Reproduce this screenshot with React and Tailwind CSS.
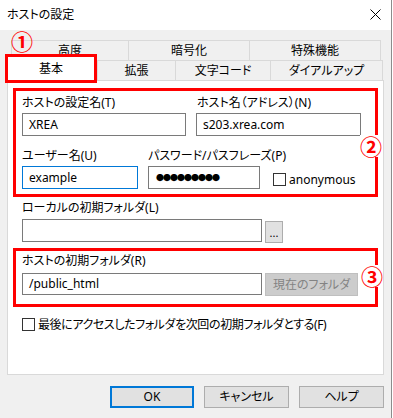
import React from 'react';

const font = "font-['Noto_Sans','Noto_Sans_CJK_JP',sans-serif] [font-feature-settings:'palt']";

function Tab({ label, w }) {
  return (
    <div className={`h-[20px] ${w} border-t border-l border-[#d9d9d9] bg-[#f0f0f0] flex items-center justify-center text-[12px] text-black last:border-r`}>
      {label}
    </div>
  );
}

function Input({ value, w, h = 'h-[23px]', focus }) {
  return (
    <div className={`${w} ${h} border ${focus ? 'border-[#0078d7]' : 'border-[#7a7a7a]'} bg-white flex items-center px-[6px] text-[12px] text-black`}>
      {value}
    </div>
  );
}

function Label({ children }) {
  return <div className="h-[16px] flex items-center text-[12px] text-black leading-none whitespace-nowrap">{children}</div>;
}

function Btn({ children, w, primary }) {
  return (
    <div className={`${w} h-[22px] bg-[#e1e1e1] flex items-center justify-center text-[12px] text-black ${primary ? 'border-2 border-[#0078d7]' : 'border border-[#adadad]'}`}>
      {children}
    </div>
  );
}

export default function App() {
  return (
    <div className={`w-[393px] h-[418px] bg-white relative overflow-hidden ${font}`}>
      <div className="w-[392px] h-full bg-[#f0f0f0] border-r border-[#8c8c8c] flex flex-col">
        {/* title bar */}
        <div className="h-[30px] bg-white flex items-center justify-between pl-[7px] pr-[10px]">
          <span className="text-[12px] text-black">ホストの設定</span>
          <svg width="11" height="11" viewBox="0 0 11 11" className="mt-[-1px]">
            <path d="M0.5 0.5 L10.5 10.5 M10.5 0.5 L0.5 10.5" stroke="#000" strokeWidth="1" fill="none" />
          </svg>
        </div>

        <div className="px-[7px] pt-[10px]">
          {/* tab rows */}
          <div className="flex ml-[4px]">
            <Tab label="高度" w="w-[117px]" />
            <Tab label="暗号化" w="w-[121px]" />
            <Tab label="特殊機能" w="w-[132px]" />
          </div>
          <div className="flex h-[20px] items-start">
            <div className="relative z-10 -ml-[2px] -mt-[6px] w-[92px] h-[29px] border-[3px] border-[#ff0000] bg-white flex items-center justify-center text-[12px] text-black">
              基本
            </div>
            <Tab label="拡張" w="w-[78px]" />
            <Tab label="文字コード" w="w-[95px]" />
            <Tab label="ダイアルアップ" w="w-[113px]" />
          </div>

          {/* panel */}
          <div className="h-[295px] border border-[#d9d9d9] bg-white px-[5px] pt-[7px]">
            <div className="border-[3px] border-[#ff0000] pt-[4px] pb-[5px] pl-[6px] pr-[7px]">
              <div className="grid grid-cols-[164px_165px] gap-x-[10px]">
                <Label>ホストの設定名(T)</Label>
                <Label><span className="ml-[1px]">ホスト名（アドレス）(N)</span></Label>
                <div className="mt-[2px]"><Input value="XREA" w="w-[164px]" /></div>
                <div className="mt-[2px]"><Input value="s203.xrea.com" w="w-[165px]" /></div>
              </div>
              <div className="flex mt-[12px]">
                <div className="w-[116px]">
                  <Label>ユーザー名(U)</Label>
                  <div className="mt-[2px]"><Input value="example" w="w-[116px]" focus /></div>
                </div>
                <div className="w-[112px] ml-[10px]">
                  <Label>パスワード/パスフレーズ(P)</Label>
                  <div className="mt-[2px]">
                    <Input w="w-[112px]" value={<span className="text-[8px] tracking-[-1px] ml-[1px]">●●●●●●●●●</span>} />
                  </div>
                </div>
                <div className="ml-[13px] self-end mb-[3px] flex items-center gap-[3px]">
                  <div className="w-[13px] h-[13px] border border-[#333] bg-white" />
                  <span className="text-[12px] text-black leading-none">anonymous</span>
                </div>
              </div>
            </div>

            <div className="px-[9px] pt-[3px]">
              <Label>ローカルの初期フォルダ(L)</Label>
              <div className="flex mt-[3px]">
                <Input w="w-[240px]" />
                <div className="ml-[3px] mt-[2px] w-[18px] h-[22px] bg-[#e1e1e1] border border-[#adadad] flex items-center justify-center text-[11px] text-black leading-none">...</div>
              </div>
            </div>

            <div className="mt-[5px] border-[3px] border-[#ff0000] pt-[2px] pb-[8px] px-[6px]">
              <Label>ホストの初期フォルダ(R)</Label>
              <div className="flex mt-[4px]">
                <Input value="/public_html" w="w-[240px]" h="h-[22px]" />
                <div className="ml-[3px] w-[93px] h-[23px] bg-[#cccccc] border border-[#bfbfbf] flex items-center justify-center text-[12px] text-[#838383]">現在のフォルダ</div>
              </div>
            </div>

            <div className="mt-[11px] px-[9px] flex items-center gap-[3px]">
              <div className="w-[13px] h-[13px] border border-[#333] bg-white" />
              <span className="text-[12px] text-black leading-none tracking-[-0.4px]">最後にアクセスしたフォルダを次回の初期フォルダとする(F)</span>
            </div>
          </div>

          {/* buttons */}
          <div className="mt-[11px] ml-[103px] flex gap-[10px]">
            <Btn w="w-[84px]" primary>OK</Btn>
            <Btn w="w-[85px]">キャンセル</Btn>
            <Btn w="w-[85px]">ヘルプ</Btn>
          </div>
        </div>
      </div>

      {/* annotation numbers */}
      <div className="absolute left-[11px] top-[30px] text-[22px] font-bold leading-none text-[#ff0000]">①</div>
      <div className="absolute left-[360px] top-[135px] text-[22px] font-bold leading-none text-[#ff0000] bg-white">②</div>
      <div className="absolute left-[361px] top-[265px] text-[22px] font-bold leading-none text-[#ff0000] bg-white">③</div>
    </div>
  );
}
